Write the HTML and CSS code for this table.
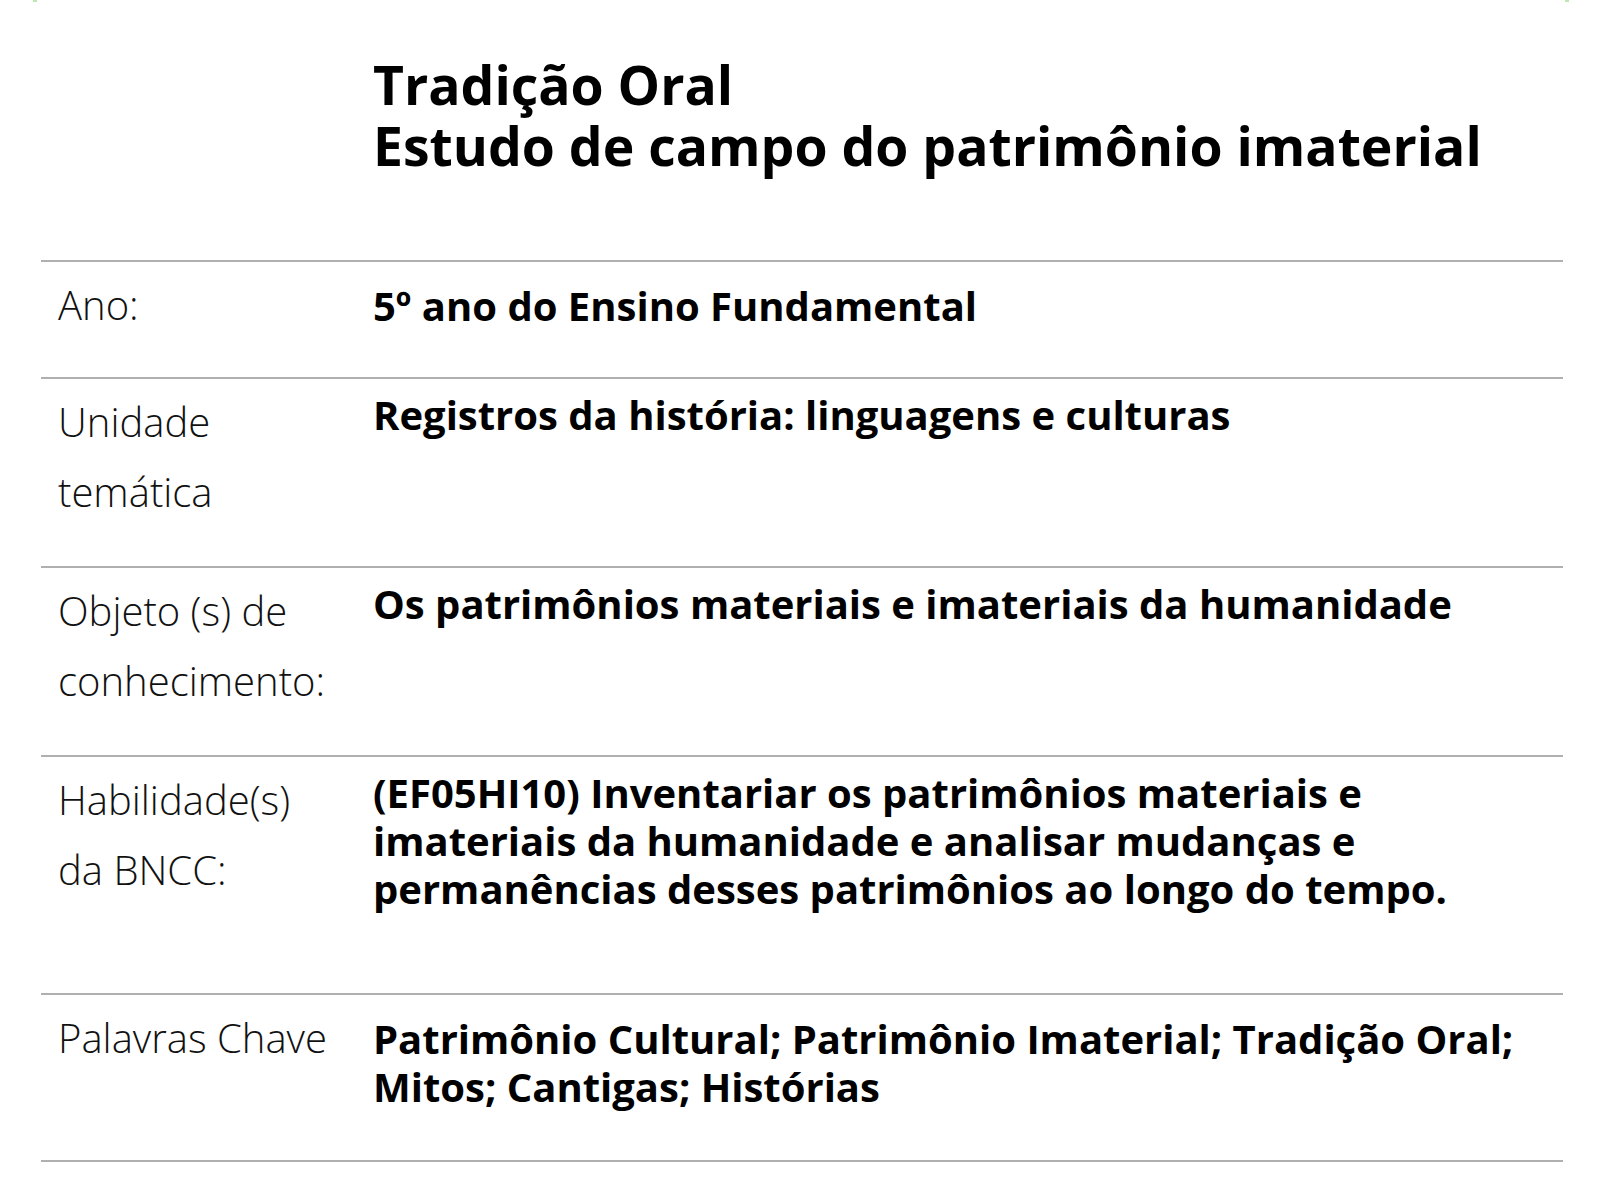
FILE: index.html
```html
<!DOCTYPE html>
<html lang="pt-BR">
<head>
<meta charset="utf-8">
<title>Tradição Oral</title>
<link rel="stylesheet" href="styles.css">
</head>
<body>
<div class="edge"></div>
<main class="page">
  <header class="header">
    <h1 class="title">Tradição Oral<br>Estudo de campo do patrimônio imaterial</h1>
  </header>
  <section class="sheet">
    <div class="row row--ano">
      <div class="label">Ano:</div>
      <div class="value value--low">5º ano do Ensino Fundamental</div>
    </div>
    <div class="row row--unidade">
      <div class="label">Unidade<br>temática</div>
      <div class="value">Registros da história: linguagens e culturas</div>
    </div>
    <div class="row row--objeto">
      <div class="label">Objeto (s) de<br>conhecimento:</div>
      <div class="value">Os patrimônios materiais e imateriais da humanidade</div>
    </div>
    <div class="row row--habilidade">
      <div class="label">Habilidade(s)<br>da BNCC:</div>
      <div class="value">(EF05HI10) Inventariar os patrimônios materiais e<br>imateriais da humanidade e analisar mudanças e<br>permanências desses patrimônios ao longo do tempo.</div>
    </div>
    <div class="row row--palavras">
      <div class="label">Palavras Chave</div>
      <div class="value value--low">Patrimônio Cultural; Patrimônio Imaterial; Tradição Oral;<br>Mitos; Cantigas; Histórias</div>
    </div>
  </section>
</main>
</body>
</html>
```

FILE: styles.css
```css
html, body {
  margin: 0;
  padding: 0;
  background: #ffffff;
}

body {
  font-family: "Open Sans", "Liberation Sans", sans-serif;
  color: #000000;
  position: relative;
}

.edge {
  position: absolute;
  top: 0;
  left: 33px;
  width: 1528px;
  height: 2px;
  border-left: 4px solid #bfe6b0;
  border-right: 4px solid #bfe6b0;
}

.page {
  padding: 0 37px 0 41px;
}

.header {
  padding: 54px 0 0 332px;
  height: 260px;
  box-sizing: border-box;
}

.title {
  margin: 0;
  font-size: 53.5px;
  line-height: 61px;
  font-weight: 700;
}

.sheet {
  border-bottom: 2px solid #b0b0b0;
}

.row {
  display: grid;
  grid-template-columns: 332px 1fr;
  border-top: 2px solid #b0b0b0;
  box-sizing: border-box;
}

.row--ano { min-height: 117px; }
.row--unidade { min-height: 189px; }
.row--objeto { min-height: 189px; }
.row--habilidade { min-height: 238px; }
.row--palavras { min-height: 167px; }

.label {
  padding: 8px 0 0 17px;
  font-size: 40px;
  font-weight: 300;
  line-height: 70px;
  color: #111111;
}

.value {
  padding: 12px 0 0 0;
  font-size: 40px;
  font-weight: 700;
  line-height: 48px;
}

.value--low {
  padding-top: 20px;
}
```
